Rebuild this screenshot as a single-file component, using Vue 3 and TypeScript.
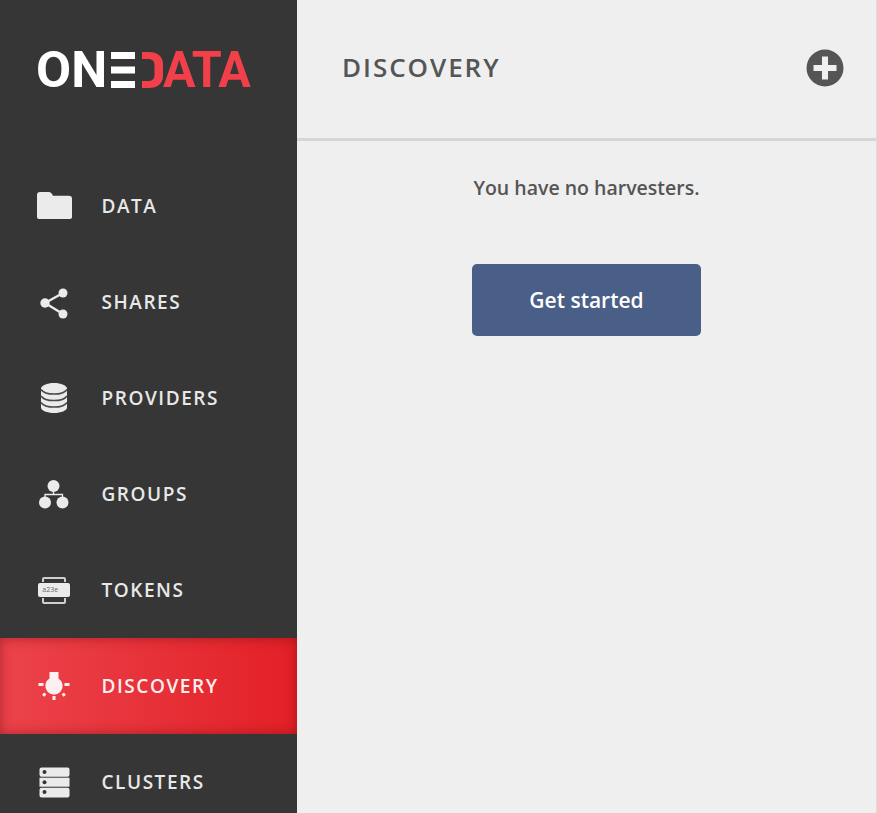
<script setup lang="ts">
const items = ['DATA', 'SHARES', 'PROVIDERS', 'GROUPS', 'TOKENS', 'DISCOVERY', 'CLUSTERS']
</script>

<template>
  <div class="app">
    <aside class="side">
      <div class="logo">
        <span class="logo-text white">ON</span>
        <svg class="logo-mark" width="53" height="36" viewBox="0 0 53 36">
          <rect x="0" y="0" width="24" height="7" fill="#fff" />
          <rect x="0" y="14.500" width="24" height="7" fill="#fff" />
          <rect x="0" y="29" width="24" height="7" fill="#fff" />
          <path d="M31 0h7c8.500 0 14 4.500 14 12v12c0 7.500-5.500 12-14 12h-7v-7h6c4 0 6.500-2 6.500-6V13c0-4-2.500-6-6.500-6h-6z" fill="#f1404a" />
        </svg>
        <span class="logo-text red">ATA</span>
      </div>
      <nav class="nav">
        <div v-for="(item, i) in items" :key="item" class="item" :class="{ active: item === 'DISCOVERY' }">
          <span class="ico">
            <svg v-if="i === 0" width="36" height="30" viewBox="0 0 36 30"><path d="M1 4a3 3 0 0 1 3-3h8c2 0 3 .6 4 2l1 1.800h16a3 3 0 0 1 3 3V26a2 2 0 0 1-2 2H3a2 2 0 0 1-2-2z" fill="#ebebeb" /></svg>
            <svg v-else-if="i === 1" width="30" height="34" viewBox="0 0 30 34"><path d="M6 18 24 8M6 18l18 11" stroke="#ebebeb" stroke-width="2.400" fill="none" /><circle cx="6" cy="18" r="4.700" fill="#ebebeb" /><circle cx="24" cy="8" r="4.500" fill="#ebebeb" /><circle cx="24" cy="29" r="4.500" fill="#ebebeb" /></svg>
            <svg v-else-if="i === 2" width="28" height="32" viewBox="0 0 28 32"><path d="M1 6.500C1 3.500 7 1 14 1s13 2.500 13 5.500v19c0 3-6 5.500-13 5.500S1 28.500 1 25.500z" fill="#ebebeb" /><path d="M1 7.500c2 3 7 4.600 13 4.600s11-1.600 13-4.600M1 14c2 3 7 4.600 13 4.600S25 17 27 14M1 20.500c2 3 7 4.600 13 4.600s11-1.600 13-4.600" stroke="#4a4a4a" stroke-width="1.500" fill="none" /></svg>
            <svg v-else-if="i === 3" width="32" height="30" viewBox="0 0 32 30"><circle cx="15.500" cy="7" r="6" fill="#ebebeb" /><circle cx="7" cy="23.500" r="6" fill="#ebebeb" /><circle cx="24.500" cy="23.500" r="6" fill="#ebebeb" /><path d="M15.500 12v3.500M7 18v-2.500h17.500V18" stroke="#ebebeb" stroke-width="1.300" fill="none" /></svg>
            <span v-else-if="i === 4" class="token">
              <span class="token-frame" />
              <span class="token-card">a23e</span>
            </span>
            <svg v-else-if="i === 5" width="32" height="30" viewBox="0 0 32 30"><path d="M11.500 1h9v6.500a8.700 8.700 0 1 1-9 0z" fill="#fdf0f1" /><path d="M.500 12h5v3h-5zM26.500 12h5v3h-5zM14.500 25h3v4h-3z" fill="#fdf0f1" /><path d="m6 21.500 2.400 1.800-1.900 2.400-2.400-1.800zM26 21.500l-2.400 1.800 1.900 2.400 2.400-1.800z" fill="#fdf0f1" /></svg>
            <svg v-else width="31" height="31" viewBox="0 0 31 31"><rect x="0.500" y="0.500" width="30" height="9.200" rx="2" fill="#ebebeb" /><rect x="0.500" y="10.700" width="30" height="9" fill="#ebebeb" /><rect x="0.500" y="20.700" width="30" height="9.800" rx="2" fill="#ebebeb" /><circle cx="5.500" cy="5" r="2" fill="#363636" /><circle cx="5.500" cy="15.200" r="2" fill="#363636" /><circle cx="5.500" cy="25" r="2" fill="#363636" /></svg>
          </span>
          <span class="label">{{ item }}</span>
        </div>
      </nav>
    </aside>
    <main class="main">
      <header class="head">
        <h1 class="title">DISCOVERY</h1>
        <svg class="plus" width="38" height="38" viewBox="0 0 38 38"><circle cx="19" cy="19" r="18.500" fill="#555" /><path d="M16 7.500h6v8.500h8.500v6H22v8.500h-6V22H7.500v-6H16z" fill="#efefef" /></svg>
      </header>
      <section class="body">
        <p class="msg">You have no harvesters.</p>
        <button class="btn">Get started</button>
      </section>
    </main>
  </div>
</template>

<style>
html, body { margin: 0; overflow: hidden; }
</style>

<style scoped>
.app { display: flex; width: 877px; height: 813px; overflow: hidden; font-family: "Open Sans", sans-serif; }
.side { width: 297px; flex: none; background: #363636; }
.logo { height: 158px; padding: 52px 0 0 36px; box-sizing: border-box; display: flex; align-items: flex-start; }
.logo-text { font-family: Roboto, sans-serif; font-weight: 700; font-size: 50px; line-height: 36px; height: 36px; display: inline-block; transform-origin: left center; }
.white { color: #fff; width: 75px; letter-spacing: 0; transform: scaleX(1.02); }
.red { color: #f1404a; letter-spacing: -1px; transform: scaleX(.97); margin-left: -1px; }
.logo-mark { flex: none; }
.nav { display: flex; flex-direction: column; }
.item { height: 96px; flex: none; display: flex; align-items: center; color: #e8e8e8; }
.item.active { color: #fdf0f1; background: linear-gradient(90deg, #ec434b, #e32027); box-shadow: inset 0 0 12px rgba(110, 10, 15, .5); }
.ico { width: 101.500px; flex: none; display: flex; justify-content: center; box-sizing: border-box; padding-left: 7px; padding-right: 0; }
.label { font-size: 19px; font-weight: 600; letter-spacing: 1.55px; }
.token { position: relative; display: block; width: 32px; height: 27px; }
.token-frame { position: absolute; left: 4px; right: 4px; top: 0; bottom: 0; border: 2px solid #cfcfcf; border-radius: 2px; box-sizing: border-box; }
.token-card { position: absolute; left: 0; right: 0; top: 6px; height: 14px; background: #ebebeb; border-radius: 2px; box-shadow: 0 0 0 1px #363636; color: #666; font-size: 7px; font-weight: 400; line-height: 14px; padding-left: 4px; box-sizing: border-box; font-family: "Open Sans", sans-serif; }
.main { flex: 1; background: #efefef; border-right: 1px solid #dcdcdc; display: flex; flex-direction: column; min-width: 0; }
.head { height: 141px; flex: none; box-sizing: border-box; border-bottom: 3px solid #d6d6d6; display: flex; align-items: flex-start; justify-content: space-between; padding: 49px 32px 0 45px; }
.title { margin: 1px 0 0; font-size: 26px; font-weight: 600; line-height: 34px; letter-spacing: 1.95px; color: #555; }
.body { display: flex; flex-direction: column; align-items: center; padding-top: 33px; }
.msg { margin: 0; font-size: 19.500px; font-weight: 600; line-height: 27px; color: #555; }
.btn { margin-top: 63px; width: 229px; height: 72px; border: 0; border-radius: 5px; background: #4a5f88; color: #fff; font: 600 21px/28px "Open Sans", sans-serif; }
</style>
